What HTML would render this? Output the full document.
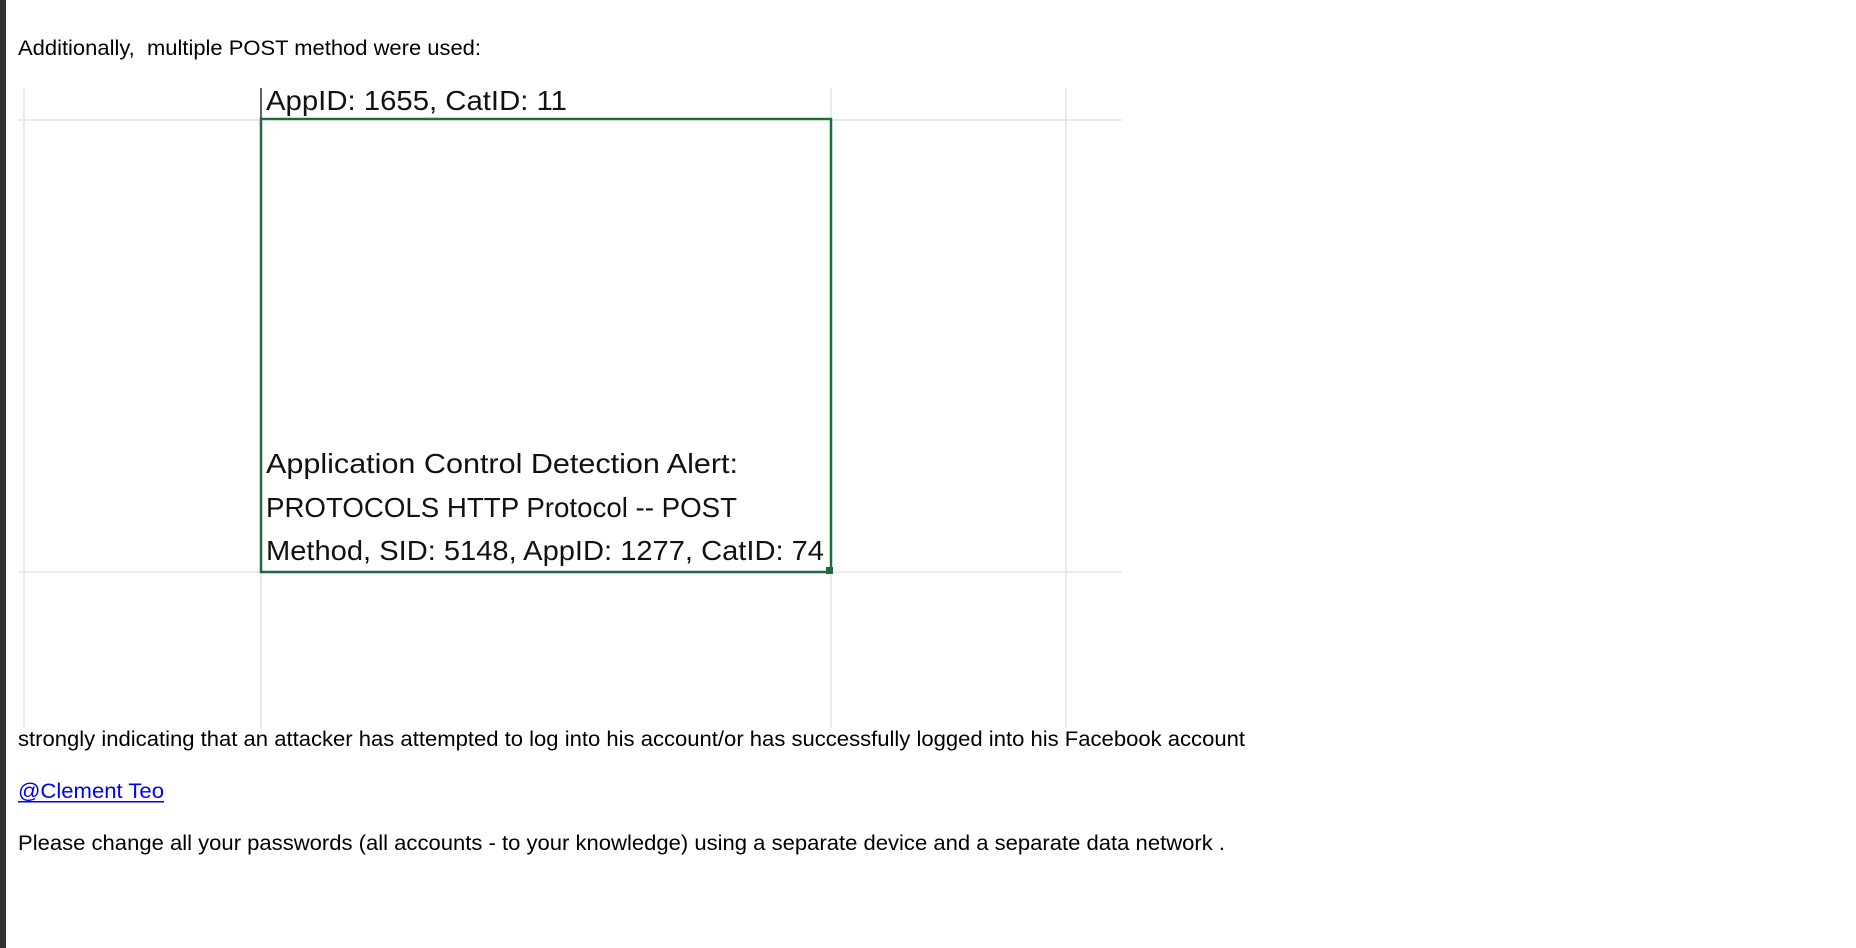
<!DOCTYPE html>
<html><head><meta charset="utf-8"><style>
html,body{margin:0;padding:0;background:#fff;width:1856px;height:948px;overflow:hidden}
svg{display:block}
</style></head><body>
<svg width="1856" height="948" xmlns="http://www.w3.org/2000/svg">
<rect x="0" y="0" width="6" height="948" fill="#333"/>
<g font-family="Liberation Sans, Arial, sans-serif" font-size="21" fill="#000">
<text x="18" y="55" textLength="463" lengthAdjust="spacingAndGlyphs">Additionally,&#160; multiple POST method were used:</text>
<text x="18" y="746" textLength="1227" lengthAdjust="spacingAndGlyphs">strongly indicating that an attacker has attempted to log into his account/or has successfully logged into his Facebook account</text>
<text x="18" y="798" fill="#0000ee" textLength="146" lengthAdjust="spacingAndGlyphs">@Clement Teo</text>
<rect x="18" y="801" width="146" height="1.5" fill="#0000ee"/>
<text x="18" y="850" textLength="1207" lengthAdjust="spacingAndGlyphs">Please change all your passwords (all accounts - to your knowledge) using a separate device and a separate data network .</text>
</g>
<g stroke="#e3e3e3" stroke-width="1.5">
<line x1="24" y1="88" x2="24" y2="728"/>
<line x1="261" y1="88" x2="261" y2="728"/>
<line x1="831" y1="88" x2="831" y2="728"/>
<line x1="1066" y1="88" x2="1066" y2="728"/>
<line x1="18" y1="120" x2="1122" y2="120"/>
<line x1="18" y1="572" x2="1122" y2="572"/>
</g>
<rect x="261" y="119" width="570" height="453" fill="#fff" stroke="#1e6b3e" stroke-width="2.5"/>
<rect x="826" y="567" width="7" height="7" fill="#1e6b3e"/>
<g font-family="Liberation Sans, Arial, sans-serif" font-size="28" fill="#111">
<text x="266" y="110" textLength="301" lengthAdjust="spacingAndGlyphs">AppID: 1655, CatID: 11</text>
<text x="266" y="473" textLength="472" lengthAdjust="spacingAndGlyphs">Application Control Detection Alert:</text>
<text x="266" y="517" textLength="471" lengthAdjust="spacingAndGlyphs">PROTOCOLS HTTP Protocol -- POST</text>
<text x="266" y="560" textLength="558" lengthAdjust="spacingAndGlyphs">Method, SID: 5148, AppID: 1277, CatID: 74</text>
</g>
<line x1="261" y1="88" x2="261" y2="119" stroke="#333" stroke-width="1.5"/>
</svg>
</body></html>
